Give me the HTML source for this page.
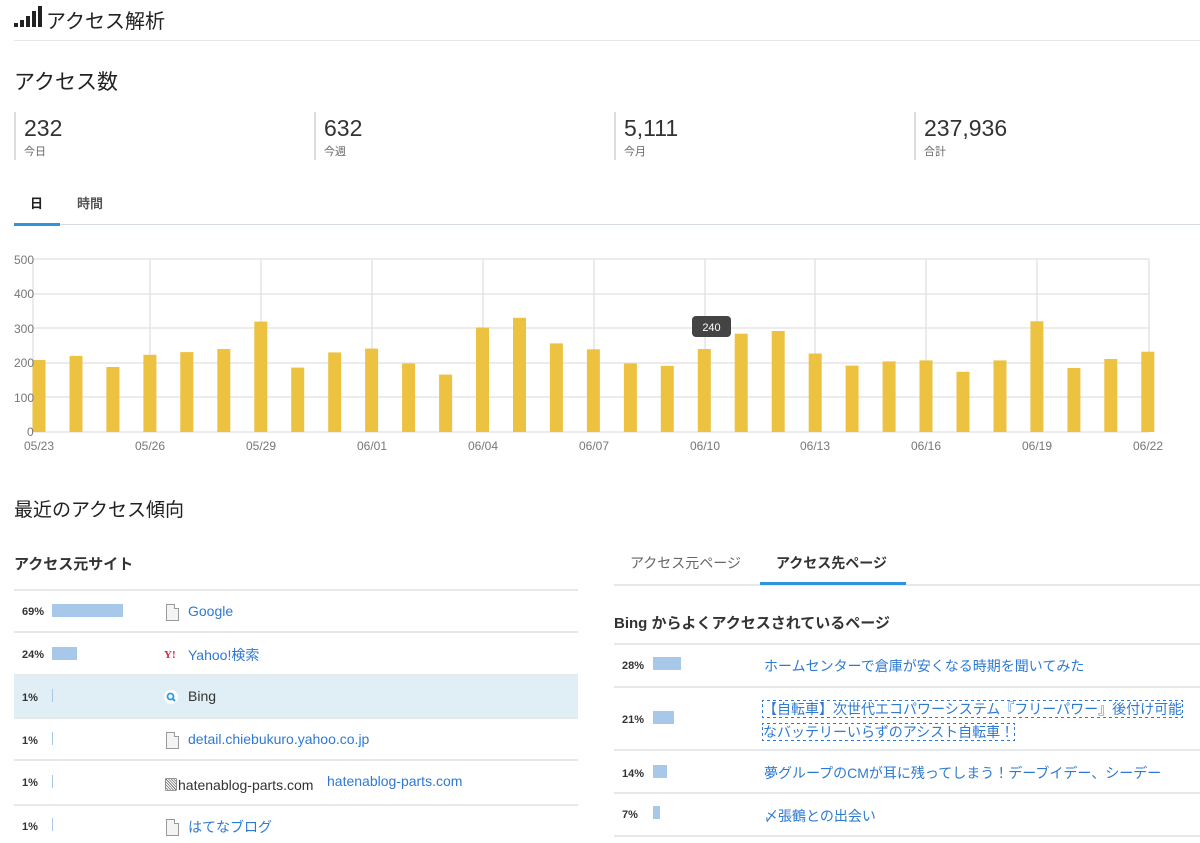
<!DOCTYPE html>
<html><head><meta charset="utf-8">
<style>
*{margin:0;padding:0;box-sizing:border-box}
body{width:1200px;height:843px;overflow:hidden;background:#fff;font-family:"Liberation Sans","Noto Sans CJK JP",sans-serif;color:#333;position:relative}
.a{position:absolute;white-space:nowrap}
.line{position:absolute;height:2px;background:#e6e9ec}
.stat{position:absolute;top:112px;height:48px;border-left:2px solid #ddd;padding-left:8px}
.stat .n{font-size:23px;line-height:26px;color:#333;margin-top:3px}
.stat .l{font-size:11px;color:#666;margin-top:2px}
.pct{position:absolute;font-size:11px;font-weight:bold;color:#333}
.bar{position:absolute;background:#a7c8e8}
.lnk{position:absolute;font-size:14px;color:#2e7ad1;white-space:nowrap}
.doc{position:absolute;width:13px;height:17px;border:1px solid #999;background:#f4f4f4}
.doc:after{content:"";position:absolute;right:-1px;top:-1px;width:4px;height:4px;background:#fff;border-left:1px solid #999;border-bottom:1px solid #999}
</style></head><body>

<svg class="a" style="left:14px;top:6px" width="28" height="22">
<rect x="0" y="17" width="4" height="4" fill="#222"/>
<rect x="6" y="14" width="4" height="7" fill="#222"/>
<rect x="12" y="10" width="4" height="11" fill="#222"/>
<rect x="18" y="5" width="4" height="16" fill="#222"/>
<rect x="24" y="0" width="4" height="21" fill="#222"/>
</svg>
<div class="a" style="left:46px;top:5px;font-size:20px;color:#222">アクセス解析</div>
<div class="line" style="left:14px;top:40px;width:1186px;height:1px"></div>

<div class="a" style="left:14px;top:66px;font-size:21px;color:#222">アクセス数</div>

<div class="stat" style="left:14px"><div class="n">232</div><div class="l">今日</div></div>
<div class="stat" style="left:314px"><div class="n">632</div><div class="l">今週</div></div>
<div class="stat" style="left:614px"><div class="n">5,111</div><div class="l">今月</div></div>
<div class="stat" style="left:914px"><div class="n">237,936</div><div class="l">合計</div></div>

<div class="a" style="left:30px;top:193px;font-size:13px;font-weight:bold;color:#222">日</div>
<div class="a" style="left:77px;top:193px;font-size:13px;font-weight:bold;color:#555">時間</div>
<div class="line" style="left:14px;top:224px;width:1186px;height:1px;background:#d5dce2"></div>
<div class="a" style="left:14px;top:223px;width:46px;height:3px;background:#2f94dc"></div>

<svg class="a" style="left:0;top:250px" width="1200" height="210" viewBox="0 250 1200 210">
<g stroke="#e0e0e0" stroke-width="1.3">
<line x1="33" y1="259" x2="1149" y2="259"/><line x1="33" y1="294" x2="1149" y2="294"/>
<line x1="33" y1="328" x2="1149" y2="328"/><line x1="33" y1="363" x2="1149" y2="363"/>
<line x1="33" y1="397" x2="1149" y2="397"/>
<line x1="150" y1="259" x2="150" y2="432"/><line x1="261" y1="259" x2="261" y2="432"/>
<line x1="372" y1="259" x2="372" y2="432"/><line x1="483" y1="259" x2="483" y2="432"/>
<line x1="594" y1="259" x2="594" y2="432"/><line x1="705" y1="259" x2="705" y2="432"/>
<line x1="815" y1="259" x2="815" y2="432"/><line x1="926" y1="259" x2="926" y2="432"/>
<line x1="1037" y1="259" x2="1037" y2="432"/><line x1="1149" y1="259" x2="1149" y2="432"/>
<line x1="33" y1="259" x2="33" y2="432"/>
<line x1="33" y1="432" x2="1149" y2="432"/>
</g>
<g fill="#edc240">
<rect x="32.5" y="360" width="13" height="72"/>
<rect x="69.5" y="355.9" width="13" height="76.1"/>
<rect x="106.4" y="367" width="13" height="65"/>
<rect x="143.4" y="354.8" width="13" height="77.2"/>
<rect x="180.3" y="352.1" width="13" height="79.9"/>
<rect x="217.3" y="349" width="13" height="83"/>
<rect x="254.3" y="321.6" width="13" height="110.4"/>
<rect x="291.2" y="367.6" width="13" height="64.4"/>
<rect x="328.2" y="352.4" width="13" height="79.6"/>
<rect x="365.1" y="348.6" width="13" height="83.4"/>
<rect x="402.1" y="363.5" width="13" height="68.5"/>
<rect x="439.1" y="374.6" width="13" height="57.4"/>
<rect x="476" y="327.5" width="13" height="104.5"/>
<rect x="513" y="317.8" width="13" height="114.2"/>
<rect x="549.9" y="343.4" width="13" height="88.6"/>
<rect x="586.9" y="349.3" width="13" height="82.7"/>
<rect x="623.9" y="363.5" width="13" height="68.5"/>
<rect x="660.8" y="365.9" width="13" height="66.1"/>
<rect x="697.8" y="349" width="13" height="83"/>
<rect x="734.7" y="333.7" width="13" height="98.3"/>
<rect x="771.7" y="331" width="13" height="101"/>
<rect x="808.7" y="353.5" width="13" height="78.5"/>
<rect x="845.6" y="365.6" width="13" height="66.4"/>
<rect x="882.6" y="361.4" width="13" height="70.6"/>
<rect x="919.5" y="360.4" width="13" height="71.6"/>
<rect x="956.5" y="371.8" width="13" height="60.2"/>
<rect x="993.5" y="360.4" width="13" height="71.6"/>
<rect x="1030.4" y="321.3" width="13" height="110.7"/>
<rect x="1067.4" y="368" width="13" height="64"/>
<rect x="1104.3" y="359" width="13" height="73"/>
<rect x="1141.3" y="351.7" width="13" height="80.3"/>
</g>
<g font-family="Liberation Sans,sans-serif" font-size="12" fill="#777">
<text x="14" y="264">500</text><text x="14" y="298">400</text><text x="14" y="333">300</text>
<text x="14" y="367">200</text><text x="14" y="402">100</text><text x="27" y="436">0</text>
<g text-anchor="middle">
<text x="39" y="450">05/23</text><text x="150" y="450">05/26</text><text x="261" y="450">05/29</text>
<text x="372" y="450">06/01</text><text x="483" y="450">06/04</text><text x="594" y="450">06/07</text>
<text x="705" y="450">06/10</text><text x="815" y="450">06/13</text><text x="926" y="450">06/16</text>
<text x="1037" y="450">06/19</text><text x="1148" y="450">06/22</text>
</g></g>
<rect x="692" y="316" width="39" height="21" rx="4" fill="#444"/>
<text x="711.5" y="331" text-anchor="middle" font-family="Liberation Sans,sans-serif" font-size="11" fill="#fff">240</text>
</svg>

<div class="a" style="left:14px;top:495px;font-size:19px;color:#222">最近のアクセス傾向</div>

<div class="a" style="left:14px;top:553px;font-size:15px;font-weight:bold;color:#333">アクセス元サイト</div>
<div class="line" style="left:14px;top:589px;width:564px"></div>
<div class="a" style="left:14px;top:676px;width:564px;height:42px;background:#e0eef5"></div>
<div class="line" style="left:14px;top:631px;width:564px"></div>
<div class="line" style="left:14px;top:674px;width:564px"></div>
<div class="line" style="left:14px;top:717px;width:564px"></div>
<div class="line" style="left:14px;top:759px;width:564px"></div>
<div class="line" style="left:14px;top:804px;width:564px"></div>

<div class="pct" style="left:22px;top:606px">69%</div><div class="bar" style="left:52px;top:604px;width:71px;height:13px"></div>
<div class="pct" style="left:22px;top:649px">24%</div><div class="bar" style="left:52px;top:647px;width:25px;height:13px"></div>
<div class="pct" style="left:22px;top:692px">1%</div><div class="bar" style="left:52px;top:689px;width:1px;height:13px"></div>
<div class="pct" style="left:22px;top:735px">1%</div><div class="bar" style="left:52px;top:732px;width:1px;height:13px"></div>
<div class="pct" style="left:22px;top:777px">1%</div><div class="bar" style="left:52px;top:775px;width:1px;height:13px"></div>
<div class="pct" style="left:22px;top:821px">1%</div><div class="bar" style="left:52px;top:818px;width:1px;height:13px"></div>

<div class="doc" style="left:166px;top:604px"></div><div class="lnk" style="left:188px;top:603px">Google</div>
<div class="a" style="left:164px;top:649px;font-size:11px;font-weight:bold;color:#e5203b;font-family:'Liberation Serif',serif">Y!</div><div class="lnk" style="left:188px;top:645px">Yahoo!検索</div>
<svg class="a" style="left:164px;top:690px" width="14" height="14"><circle cx="7" cy="7" r="7" fill="#fff"/><circle cx="6.5" cy="6.5" r="3" fill="none" stroke="#2a9fe0" stroke-width="1.8"/><line x1="8.7" y1="8.7" x2="11" y2="11" stroke="#2a9fe0" stroke-width="2"/></svg>
<div class="a" style="left:188px;top:688px;font-size:14px;color:#333">Bing</div>
<div class="doc" style="left:166px;top:732px"></div><div class="lnk" style="left:188px;top:731px">detail.chiebukuro.yahoo.co.jp</div>
<div class="a" style="left:164px;top:775px;font-size:14px;color:#333">▧hatenablog-parts.com</div><div class="lnk" style="left:327px;top:773px">hatenablog-parts.com</div>
<div class="doc" style="left:166px;top:819px"></div><div class="lnk" style="left:188px;top:817px">はてなブログ</div>

<div class="a" style="left:630px;top:553px;font-size:14px;color:#666">アクセス元ページ</div>
<div class="a" style="left:776px;top:553px;font-size:14px;font-weight:bold;color:#333">アクセス先ページ</div>
<div class="line" style="left:614px;top:584px;width:586px"></div>
<div class="a" style="left:760px;top:582px;width:146px;height:3px;background:#2f94dc"></div>

<div class="a" style="left:614px;top:612px;font-size:15px;font-weight:bold;color:#333">Bing からよくアクセスされているページ</div>
<div class="line" style="left:614px;top:643px;width:586px"></div>
<div class="line" style="left:614px;top:686px;width:586px"></div>
<div class="line" style="left:614px;top:749px;width:586px"></div>
<div class="line" style="left:614px;top:792px;width:586px"></div>
<div class="line" style="left:614px;top:835px;width:586px"></div>

<div class="pct" style="left:622px;top:660px">28%</div><div class="bar" style="left:653px;top:657px;width:28px;height:13px"></div>
<div class="pct" style="left:622px;top:714px">21%</div><div class="bar" style="left:653px;top:711px;width:21px;height:13px"></div>
<div class="pct" style="left:622px;top:768px">14%</div><div class="bar" style="left:653px;top:765px;width:14px;height:13px"></div>
<div class="pct" style="left:622px;top:809px">7%</div><div class="bar" style="left:653px;top:806px;width:7px;height:13px"></div>

<div class="lnk" style="left:764px;top:656px">ホームセンターで倉庫が安くなる時期を聞いてみた</div>
<div class="lnk" style="left:763px;top:698px;width:430px;white-space:normal;line-height:23px;font-size:14px"><span style="outline:1px dotted #2e7ad1">【自転車】次世代エコパワーシステム『フリーパワー』後付け可能なバッテリーいらずのアシスト自転車！</span></div>
<div class="lnk" style="left:764px;top:763px">夢グループのCMが耳に残ってしまう！デーブイデー、シーデー</div>
<div class="lnk" style="left:764px;top:806px">〆張鶴との出会い</div>

</body></html>
